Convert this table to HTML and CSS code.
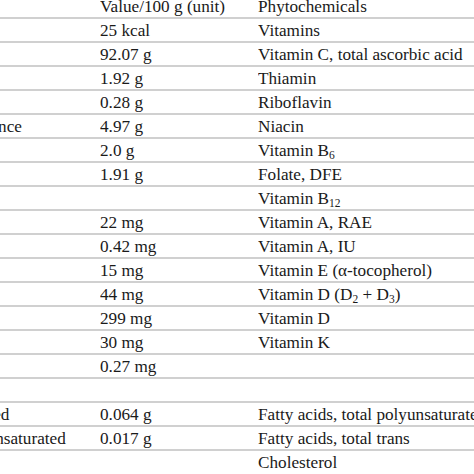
FILE: index.html
```html
<!DOCTYPE html>
<html>
<head>
<meta charset="utf-8">
<link rel="stylesheet" href="styles.css">
</head>
<body>
<div class="viewport">
<div class="nutrients">
  <div class="row head"><span class="c1">Nutrient</span><span class="c2">Value/100 g (unit)</span><span class="c3">Phytochemicals</span></div>
  <div class="row"><span class="c1">Energy</span><span class="c2">25 kcal</span><span class="c3">Vitamins</span></div>
  <div class="row"><span class="c1">Water</span><span class="c2">92.07 g</span><span class="c3">Vitamin C, total ascorbic acid</span></div>
  <div class="row"><span class="c1">Protein</span><span class="c2">1.92 g</span><span class="c3">Thiamin</span></div>
  <div class="row"><span class="c1">Total lipid (fat)</span><span class="c2">0.28 g</span><span class="c3">Riboflavin</span></div>
  <div class="row"><span class="c1">Carbohydrate, by difference</span><span class="c2">4.97 g</span><span class="c3">Niacin</span></div>
  <div class="row"><span class="c1">Fiber, total dietary</span><span class="c2">2.0 g</span><span class="c3">Vitamin B<sub>6</sub></span></div>
  <div class="row"><span class="c1">Sugars, total</span><span class="c2">1.91 g</span><span class="c3">Folate, DFE</span></div>
  <div class="row"><span class="c1">Minerals</span><span class="c2"></span><span class="c3">Vitamin B<sub>12</sub></span></div>
  <div class="row"><span class="c1">Calcium, Ca</span><span class="c2">22 mg</span><span class="c3">Vitamin A, RAE</span></div>
  <div class="row"><span class="c1">Iron, Fe</span><span class="c2">0.42 mg</span><span class="c3">Vitamin A, IU</span></div>
  <div class="row"><span class="c1">Magnesium, Mg</span><span class="c2">15 mg</span><span class="c3">Vitamin E (α-tocopherol)</span></div>
  <div class="row"><span class="c1">Phosphorus, P</span><span class="c2">44 mg</span><span class="c3">Vitamin D (D<sub>2</sub> + D<sub>3</sub>)</span></div>
  <div class="row"><span class="c1">Potassium, K</span><span class="c2">299 mg</span><span class="c3">Vitamin D</span></div>
  <div class="row"><span class="c1">Sodium, Na</span><span class="c2">30 mg</span><span class="c3">Vitamin K</span></div>
  <div class="row"><span class="c1">Zinc, Zn</span><span class="c2">0.27 mg</span><span class="c3"></span></div>
  <div class="row"><span class="c1">Lipids</span><span class="c2"></span><span class="c3"></span></div>
  <div class="row"><span class="c1">Fatty acids, total saturated</span><span class="c2">0.064 g</span><span class="c3">Fatty acids, total polyunsaturated</span></div>
  <div class="row"><span class="c1">Fatty acids, total monounsaturated</span><span class="c2">0.017 g</span><span class="c3">Fatty acids, total trans</span></div>
  <div class="row last"><span class="c1"></span><span class="c2"></span><span class="c3">Cholesterol</span></div>
</div>
</div>
</body>
</html>
```
FILE: styles.css
```css
html, body {
  margin: 0;
  padding: 0;
  background: #ffffff;
}
.viewport {
  width: 474px;
  height: 474px;
  overflow: hidden;
}
.nutrients {
  width: 950px;
  margin-left: -171px;
  margin-top: -5px;
  font-family: "Liberation Serif", "Times New Roman", serif;
  font-size: 17.2px;
  color: #1a1a1a;
}
.row {
  display: grid;
  grid-template-columns: 271px 158px 1fr;
  align-items: center;
  height: 22px;
  border-bottom: 2px solid #d0d0d0;
  line-height: 19px;
  white-space: nowrap;
}
.row.last {
  border-bottom: none;
}
.c1, .c2, .c3 {
  overflow: hidden;
}
sub {
  font-size: 11.5px;
  line-height: 0;
  vertical-align: -3px;
}
```
